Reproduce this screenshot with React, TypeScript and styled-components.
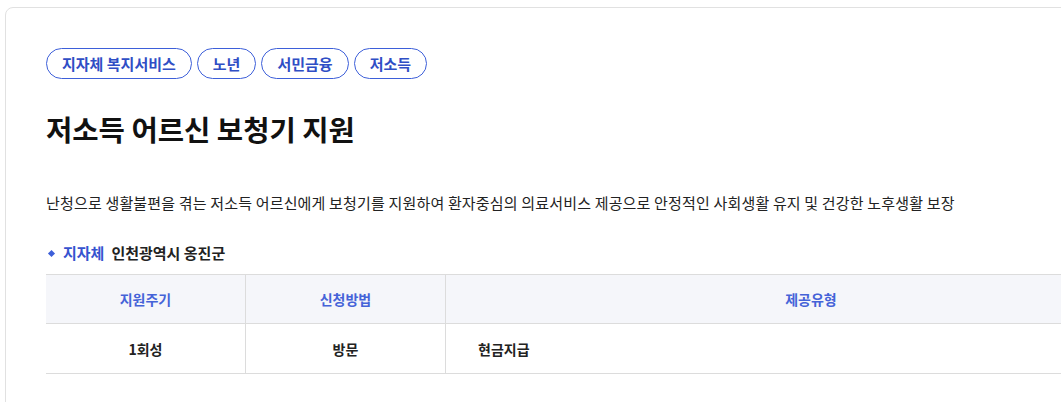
import React from "react";
import styled, { createGlobalStyle } from "styled-components";

const Global = createGlobalStyle`
  html, body { margin: 0; padding: 0; background: #fff; overflow: hidden; }
  body { font-family: "Noto Sans CJK KR", "Noto Sans", sans-serif; color: #222; }
  * { box-sizing: border-box; }
`;

const Page = styled.div`
  padding: 7px 0 0 5px;
  width: 1300px;
`;

const Card = styled.section`
  width: 1212px;
  border: 1px solid #e1e1e1;
  border-radius: 8px;
  padding: 40px 40px 60px 40px;
  background: #fff;
`;

const TagRow = styled.div`
  display: flex;
  gap: 5px;
`;

const Tag = styled.span`
  display: inline-flex;
  align-items: center;
  height: 31px;
  padding: 0 15px;
  border: 1px solid #3d5fd9;
  border-radius: 16px;
  color: #2f4ec5;
  font-size: 15px;
  font-weight: 700;
  line-height: 1;
`;

const Title = styled.h1`
  margin: 30px 0 0;
  font-size: 28.6px;
  font-weight: 700;
  line-height: 40px;
  color: #111;
  letter-spacing: 0;
`;

const Desc = styled.p`
  margin: 42px 0 0;
  font-size: 15px;
  line-height: 24px;
  color: #222;
  letter-spacing: 0.17px;
`;

const Meta = styled.div`
  margin-top: 26px;
  display: flex;
  align-items: center;
  gap: 8px;
  font-size: 15px;
  font-weight: 700;
  line-height: 24px;
`;

const Diamond = styled.span`
  width: 5px;
  height: 5px;
  background: #3d5fd9;
  transform: rotate(45deg);
  margin: 0 1px 0 3px;
`;

const MetaLabel = styled.span`
  color: #3653cf;
`;

const MetaValue = styled.span`
  color: #222;
  margin-left: -1px;
`;

const Table = styled.div`
  margin-top: 9px;
  display: grid;
  grid-template-columns: 200px 200px 1fr;
  border-top: 1px solid #dcdcdc;
`;

const Cell = styled.div<{ $head?: boolean; $left?: boolean; $last?: boolean }>`
  height: ${(p) => (p.$head ? "49px" : "50px")};
  display: flex;
  align-items: center;
  justify-content: ${(p) => (p.$left ? "flex-start" : "center")};
  padding: ${(p) => (p.$left ? "0 0 0 32px" : "0")};
  background: ${(p) => (p.$head ? "#f5f6fa" : "#fff")};
  border-bottom: 1px solid #dcdcdc;
  border-right: ${(p) => (p.$last ? "none" : "1px solid #dcdcdc")};
  font-size: 14px;
  font-weight: 700;
  color: ${(p) => (p.$head ? "#4563d8" : "#222")};
`;

export default function App() {
  return (
    <>
      <Global />
      <Page>
        <Card>
          <TagRow>
            <Tag>지자체 복지서비스</Tag>
            <Tag>노년</Tag>
            <Tag>서민금융</Tag>
            <Tag>저소득</Tag>
          </TagRow>
          <Title>저소득 어르신 보청기 지원</Title>
          <Desc>
            난청으로 생활불편을 겪는 저소득 어르신에게 보청기를 지원하여 환자중심의 의료서비스 제공으로 안정적인 사회생활 유지 및 건강한 노후생활 보장
          </Desc>
          <Meta>
            <Diamond />
            <MetaLabel>지자체</MetaLabel>
            <MetaValue>인천광역시 옹진군</MetaValue>
          </Meta>
          <Table>
            <Cell $head>지원주기</Cell>
            <Cell $head>신청방법</Cell>
            <Cell $head $last>제공유형</Cell>
            <Cell>1회성</Cell>
            <Cell>방문</Cell>
            <Cell $left $last>현금지급</Cell>
          </Table>
        </Card>
      </Page>
    </>
  );
}
